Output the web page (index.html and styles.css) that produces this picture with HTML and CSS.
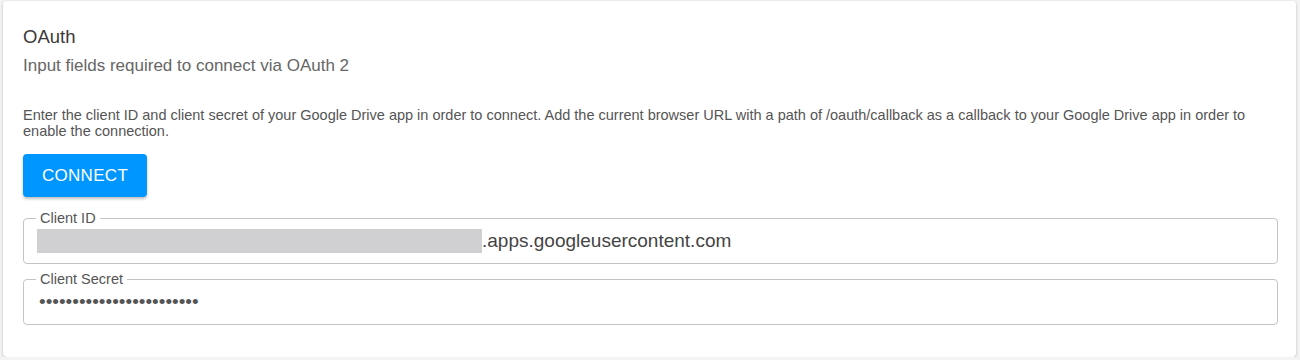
FILE: index.html
```html
<!DOCTYPE html>
<html>

<head>
    <title>OAuth</title>
    <link rel="stylesheet" href="styles.css">
</head>

<body>
    <div class="card">
        <div class="card-header">
            <h2>OAuth</h2>
            <p class="subtitle">Input fields required to connect via OAuth 2</p>
        </div>
        <div class="card-body">
            <p class="description">Enter the client ID and client secret of your Google Drive app in order to connect. Add the current browser URL with a path of /oauth/callback as a callback to your Google Drive app in order to enable the connection.</p>
            <button class="connect">Connect</button>
            <fieldset class="field">
                <legend>Client ID</legend>
                <div class="field-value"><span class="redacted"></span>.apps.googleusercontent.com</div>
            </fieldset>
            <fieldset class="field">
                <legend>Client Secret</legend>
                <div class="field-value secret">&bull;&bull;&bull;&bull;&bull;&bull;&bull;&bull;&bull;&bull;&bull;&bull;&bull;&bull;&bull;&bull;&bull;&bull;&bull;&bull;&bull;&bull;&bull;&bull;</div>
            </fieldset>
        </div>
    </div>
</body>

</html>
```

FILE: styles.css
```css
body {
    margin: 0;
    padding: 1px 4px 0 3px;
    background-color: #f4f4f4;
    font-family: "Liberation Sans", Arial, sans-serif;
}

.card {
    background-color: #fff;
    border-radius: 4px;
    box-shadow: 0 1px 3px rgba(0, 0, 0, 0.25);
    padding: 24px 18px 0 20px;
    height: 356px;
    box-sizing: border-box;
}

.card-header h2 {
    margin: 0;
    font-size: 18.5px;
    font-weight: normal;
    color: #3a3a3a;
    line-height: 24px;
}

.subtitle {
    margin: 6px 0 0;
    font-size: 17px;
    color: #666;
    line-height: 22px;
}

.card-body {
    margin-top: 30px;
}

.description {
    margin: 0;
    font-size: 14.5px;
    color: #555;
    line-height: 16px;
}

.connect {
    display: block;
    margin-top: 15px;
    width: 124px;
    height: 43px;
    background-color: #0096ff;
    color: #fff;
    border: none;
    border-radius: 4px;
    box-shadow: 0 2px 3px rgba(0, 0, 0, 0.25);
    font-family: inherit;
    font-size: 17px;
    text-transform: uppercase;
    letter-spacing: 0.3px;
}

.field {
    margin: 13px 0 0;
    padding: 0 14px 10px 13px;
    border: 1px solid #c4c4c4;
    border-radius: 4px;
}

.field + .field {
    margin-top: 7px;
}

.field legend {
    padding: 0 4px;
    margin-left: -1px;
    font-size: 14.5px;
    color: #555;
    line-height: 16px;
}

.field-value {
    display: flex;
    align-items: center;
    height: 24px;
    margin-top: 3px;
    font-size: 19px;
    color: #444;
}

.redacted {
    display: inline-block;
    width: 445px;
    height: 24px;
    background-color: #d0d0d2;
}

.secret {
    padding-left: 2px;
    color: #555;
}
```
